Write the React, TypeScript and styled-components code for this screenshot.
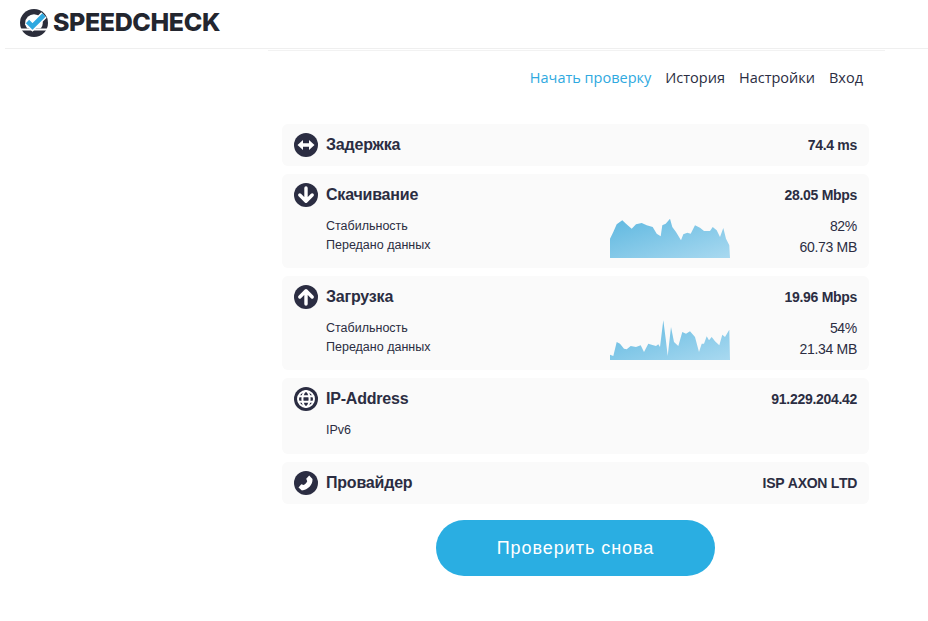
import React from "react";
import styled, { createGlobalStyle } from "styled-components";

const Global = createGlobalStyle`
  html, body { margin: 0; padding: 0; background: #fff; }
  body { font-family: "Liberation Sans", Arial, sans-serif; color: #2b2d42; }
`;

const Page = styled.div`
  width: 928px;
  height: 621px;
  overflow: hidden;
  display: flex;
  flex-direction: column;
`;

const Header = styled.header`
  height: 44px;
  margin-left: 5px;
  border-bottom: 1px solid #efefef;
  display: flex;
  align-items: center;
  gap: 5px;
  padding: 0 0 4px 15px;
`;

const LogoText = styled.span`
  font-family: "Inter", sans-serif;
  font-weight: 800;
  font-size: 25px;
  letter-spacing: -0.4px;
  color: #23262f;
`;

const LogoSvg = styled.svg`
  width: 28px;
  height: 28px;
  flex: none;
  margin-top: 1px;
`;

const Divider = styled.div`
  height: 1px;
  background: #f2f2f2;
  margin: 1px 43px 0 268px;
`;

const Nav = styled.nav`
  display: flex;
  justify-content: flex-end;
  gap: 14px;
  height: 56px;
  padding: 17px 65px 0 0;
`;

const NavLink = styled.a<{ $active?: boolean }>`
  font-family: "Open Sans", sans-serif;
  font-size: 14.5px;
  line-height: 20px;
  color: ${(p) => (p.$active ? "#2fa9e0" : "#2b2d42")};
`;

const List = styled.div`
  margin-left: 282px;
  width: 587px;
  display: flex;
  flex-direction: column;
  gap: 8px;
`;

const Card = styled.section<{ $h: number }>`
  height: ${(p) => p.$h}px;
  background: #fafafa;
  border-radius: 6px;
  padding: 9px 12px 0 12px;
  box-sizing: border-box;
`;

const Head = styled.div`
  display: flex;
  align-items: center;
  gap: 8px;
  height: 24px;
`;

const Icon = styled.svg`
  width: 24px;
  height: 24px;
  flex: none;
`;

const Title = styled.h3`
  flex: 1;
  margin: 0;
  font-size: 16px;
  font-weight: 700;
  letter-spacing: -0.2px;
  color: #2b2d42;
`;

const Value = styled.span`
  font-size: 14px;
  font-weight: 700;
  font-kerning: none;
  letter-spacing: -0.3px;
  color: #2b2d42;
`;

const Details = styled.div`
  display: grid;
  grid-template-columns: 284px 120px 1fr;
  padding-left: 32px;
  margin-top: 9px;
`;

const Labels = styled.div`
  padding-top: 1px;
  font-size: 12.5px;
  line-height: 19px;
  color: #2b2d42;
`;

const Numbers = styled.div`
  font-size: 14px;
  line-height: 21px;
  letter-spacing: -0.3px;
  text-align: right;
  color: #2b2d42;
`;

const Chart = styled.svg`
  width: 120px;
  height: 42px;
  display: block;
`;

const Footer = styled.div`
  display: flex;
  justify-content: center;
  padding: 16px 0 0 223px;
`;

const Button = styled.button`
  width: 279px;
  height: 56px;
  border: 0;
  border-radius: 28px;
  background: #2aaee2;
  color: #fff;
  font-family: "Liberation Sans", Arial, sans-serif;
  font-size: 18px;
  letter-spacing: 0.95px;
`;

const Round = ({ children }: { children: React.ReactNode }) => (
  <Icon viewBox="0 0 24 24">
    <circle cx="12" cy="12" r="12" fill="#2b2d42" />
    {children}
  </Icon>
);

const LogoMark = () => (
  <LogoSvg viewBox="0 0 28 28">
    <defs>
      <clipPath id="logoTop">
        <rect x="0" y="0" width="28" height="19.500" />
      </clipPath>
      <clipPath id="logoBottom">
        <rect x="0" y="21.500" width="28" height="7" />
      </clipPath>
    </defs>
    <g clipPath="url(#logoTop)">
      <circle cx="14" cy="14" r="14" fill="#2b2d3a" />
      <circle cx="14" cy="14" r="8.800" fill="#fff" />
    </g>
    <circle cx="14" cy="14" r="14" fill="#2b2d3a" clipPath="url(#logoBottom)" />
    <path d="M7.500 12.500l5 5L24 6" fill="none" stroke="#fff" strokeWidth="7.600" />
    <path d="M7.500 12.500l5 5L24 6" fill="none" stroke="#2fa9e0" strokeWidth="4.600" />
  </LogoSvg>
);

const download =
  "0,42 0,22.700 3.300,16 6.700,8.300 12.300,4.300 16,7.700 21.700,12.700 26,8.300 31.700,7 36.700,9.300 42.700,11 46.700,17.700 50.700,20.300 52.300,9.300 55.700,7.700 60,2.700 62.300,11 66,16 71,24.300 73.300,18.300 77.300,16.700 80.700,17.700 85,9.300 90,11.700 94,15 100,15 102.700,11 106.700,14.300 110,21 113.300,12 116,22.700 119.300,29.300 120,42";

const upload =
  "0,42 0,36.700 3.300,38 6.700,24 10,25.700 14,30.700 16.700,31.300 20.700,28 26,29 30.700,27.300 34,34 38.300,25.700 43.300,27.300 46,28 48.300,26.300 50,29 53.300,2.300 55.700,20.700 57.700,38 61,9 64,24 68.300,28 72.300,14 76,15.700 80,13.300 85,19 89,34 91.700,25.700 94,25.700 96.700,18.300 99,22.300 101.700,19 105,23.300 109.300,27.300 112.300,16.700 115,19 119.300,11.700 120,42";

const Area = ({ id, points }: { id: string; points: string }) => (
  <Chart viewBox="0 0 120 42" preserveAspectRatio="none">
    <defs>
      <linearGradient id={id} x1="0" y1="0" x2="1" y2="1">
        <stop offset="0" stopColor="#5fb8e0" />
        <stop offset="1" stopColor="#a9d9f0" />
      </linearGradient>
    </defs>
    <polygon points={points} fill={`url(#${id})`} />
  </Chart>
);

export default function App() {
  return (
    <Page>
      <Global />
      <Header>
        <LogoMark />
        <LogoText>SPEEDCHECK</LogoText>
      </Header>
      <Divider />
      <Nav>
        <NavLink $active>Начать проверку</NavLink>
        <NavLink>История</NavLink>
        <NavLink>Настройки</NavLink>
        <NavLink>Вход</NavLink>
      </Nav>
      <List>
        <Card $h={42}>
          <Head>
            <Round>
              <path d="M3.500 12l5.500-5v3.300h6V7l5.500 5-5.500 5v-3.300H9V17z" fill="#fff" />
            </Round>
            <Title>Задержка</Title>
            <Value>74.4 ms</Value>
          </Head>
        </Card>
        <Card $h={94}>
          <Head>
            <Round>
              <path d="M12 5v13M5.800 12l6.200 6.200 6.200-6.200" fill="none" stroke="#fff" strokeWidth="3.400" strokeLinecap="round" strokeLinejoin="round" />
            </Round>
            <Title>Скачивание</Title>
            <Value>28.05 Mbps</Value>
          </Head>
          <Details>
            <Labels>Стабильность<br />Передано данных</Labels>
            <Area id="a" points={download} />
            <Numbers>82%<br />60.73 MB</Numbers>
          </Details>
        </Card>
        <Card $h={94}>
          <Head>
            <Round>
              <path d="M12 19V6M5.800 12L12 5.800l6.200 6.200" fill="none" stroke="#fff" strokeWidth="3.400" strokeLinecap="round" strokeLinejoin="round" />
            </Round>
            <Title>Загрузка</Title>
            <Value>19.96 Mbps</Value>
          </Head>
          <Details>
            <Labels>Стабильность<br />Передано данных</Labels>
            <Area id="b" points={upload} />
            <Numbers>54%<br />21.34 MB</Numbers>
          </Details>
        </Card>
        <Card $h={76}>
          <Head>
            <Round>
              <g fill="none" stroke="#fff" strokeWidth="2">
                <circle cx="12" cy="12" r="8" />
                <ellipse cx="12" cy="12" rx="3.600" ry="8" />
                <path d="M4 9.300h16M4 14.700h16" />
              </g>
            </Round>
            <Title>IP-Address</Title>
            <Value>91.229.204.42</Value>
          </Head>
          <Details>
            <Labels>IPv6</Labels>
          </Details>
        </Card>
        <Card $h={42}>
          <Head>
            <Round>
              <path d="M15.200 4.500l3.300 3.600c.3 6-4.500 10.800-10.600 11.400l-3.400-3 2.800-3.300 2.500.9c1.500-1 2.600-2.200 3.400-3.800l-1-2.500z" fill="#fff" />
            </Round>
            <Title>Провайдер</Title>
            <Value>ISP AXON LTD</Value>
          </Head>
        </Card>
      </List>
      <Footer>
        <Button>Проверить снова</Button>
      </Footer>
    </Page>
  );
}
